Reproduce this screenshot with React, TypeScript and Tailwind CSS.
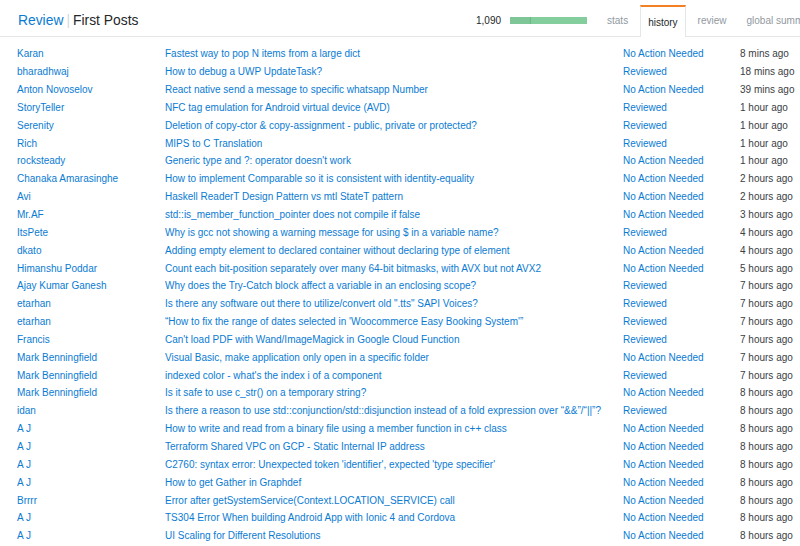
import React from 'react';

type Row = { user: string; title: string; status: 'No Action Needed' | 'Reviewed'; time: string };

const NA = 'No Action Needed' as const;
const RV = 'Reviewed' as const;

const rows: Row[] = [
  { user: 'Karan', title: 'Fastest way to pop N items from a large dict', status: NA, time: '8 mins ago' },
  { user: 'bharadhwaj', title: 'How to debug a UWP UpdateTask?', status: RV, time: '18 mins ago' },
  { user: 'Anton Novoselov', title: 'React native send a message to specific whatsapp Number', status: NA, time: '39 mins ago' },
  { user: 'StoryTeller', title: 'NFC tag emulation for Android virtual device (AVD)', status: RV, time: '1 hour ago' },
  { user: 'Serenity', title: 'Deletion of copy-ctor & copy-assignment - public, private or protected?', status: RV, time: '1 hour ago' },
  { user: 'Rich', title: 'MIPS to C Translation', status: RV, time: '1 hour ago' },
  { user: 'rocksteady', title: "Generic type and ?: operator doesn't work", status: NA, time: '1 hour ago' },
  { user: 'Chanaka Amarasinghe', title: "How to implement Comparable so it is consistent with identity-equality", status: NA, time: '2 hours ago' },
  { user: 'Avi', title: 'Haskell ReaderT Design Pattern vs mtl StateT pattern', status: NA, time: '2 hours ago' },
  { user: 'Mr.AF', title: 'std::is_member_function_pointer does not compile if false', status: NA, time: '3 hours ago' },
  { user: 'ItsPete', title: 'Why is gcc not showing a warning message for using $ in a variable name?', status: RV, time: '4 hours ago' },
  { user: 'dkato', title: 'Adding empty element to declared container without declaring type of element', status: NA, time: '4 hours ago' },
  { user: 'Himanshu Poddar', title: 'Count each bit-position separately over many 64-bit bitmasks, with AVX but not AVX2', status: NA, time: '5 hours ago' },
  { user: 'Ajay Kumar Ganesh', title: 'Why does the Try-Catch block affect a variable in an enclosing scope?', status: RV, time: '7 hours ago' },
  { user: 'etarhan', title: 'Is there any software out there to utilize/convert old ".tts" SAPI Voices?', status: RV, time: '7 hours ago' },
  { user: 'etarhan', title: "\u201CHow to fix the range of dates selected in 'Woocommerce Easy Booking System'\u201D", status: RV, time: '7 hours ago' },
  { user: 'Francis', title: "Can't load PDF with Wand/ImageMagick in Google Cloud Function", status: RV, time: '7 hours ago' },
  { user: 'Mark Benningfield', title: 'Visual Basic, make application only open in a specific folder', status: NA, time: '7 hours ago' },
  { user: 'Mark Benningfield', title: "indexed color - what's the index i of a component", status: RV, time: '7 hours ago' },
  { user: 'Mark Benningfield', title: 'Is it safe to use c_str() on a temporary string?', status: NA, time: '8 hours ago' },
  { user: 'idan', title: 'Is there a reason to use std::conjunction/std::disjunction instead of a fold expression over \u201C&&\u201D/\u201C||\u201D?', status: RV, time: '8 hours ago' },
  { user: 'A J', title: 'How to write and read from a binary file using a member function in c++ class', status: NA, time: '8 hours ago' },
  { user: 'A J', title: 'Terraform Shared VPC on GCP - Static Internal IP address', status: NA, time: '8 hours ago' },
  { user: 'A J', title: "C2760: syntax error: Unexpected token 'identifier', expected 'type specifier'", status: NA, time: '8 hours ago' },
  { user: 'A J', title: 'How to get Gather in Graphdef', status: NA, time: '8 hours ago' },
  { user: 'Brrrr', title: 'Error after getSystemService(Context.LOCATION_SERVICE) call', status: NA, time: '8 hours ago' },
  { user: 'A J', title: 'TS304 Error When building Android App with Ionic 4 and Cordova', status: NA, time: '8 hours ago' },
  { user: 'A J', title: 'UI Scaling for Different Resolutions', status: NA, time: '8 hours ago' },
];

const Header = () => (
  <div className="flex items-end h-[37px] border-b border-[#e4e6e8] pl-[18px]">
    <div className="flex items-center w-[458px] h-[36px] pt-[4px] text-[13.85px]">
      <a className="text-[#0a7bd3]">Review</a>
      <span className="mx-[3px] text-[#d6d9dc]">|</span>
      <span className="text-[#242729]">First Posts</span>
    </div>
    <div className="flex items-center h-[36px] pt-[5px] text-[10px] whitespace-nowrap">
      <span className="text-[#242729]">1,090</span>
      <div className="flex w-[77px] h-[7px] ml-[9px]">
        <div className="w-[20px] bg-[#7ec697]" />
        <div className="w-px bg-[#6bb884]" />
        <div className="flex-1 bg-[#84cd9c]" />
      </div>
      <span className="ml-[20px] text-[#9199a1]">stats</span>
      <div className="-mb-px flex items-center h-[32px] self-end px-[7px] ml-[12px] bg-white border-x border-[#e4e6e8] border-t-2 border-t-[#f48024] text-[#242729]">
        history
      </div>
      <span className="ml-[12px] text-[#9199a1]">review</span>
      <span className="ml-[20px] text-[#9199a1]">global summary</span>
    </div>
  </div>
);

export default function App() {
  return (
    <div className="w-[800px] h-[546px] overflow-hidden bg-white" style={{ fontFamily: '"Liberation Sans", Arial, sans-serif' }}>
      <div className="w-[850px]">
        <Header />
        <div className="pt-[8px] pl-[17px] text-[10px]">
          {rows.map((r, i) => (
            <div key={i} className="grid grid-cols-[148px_458px_117px_auto] h-[17.85px] items-center whitespace-nowrap">
              <a className="text-[#0a7bd3]">{r.user}</a>
              <a className="text-[#0a7bd3]">{r.title}</a>
              <a className="text-[#0a7bd3]">{r.status}</a>
              <span className="text-[#3b4045]">{r.time}</span>
            </div>
          ))}
        </div>
      </div>
    </div>
  );
}
